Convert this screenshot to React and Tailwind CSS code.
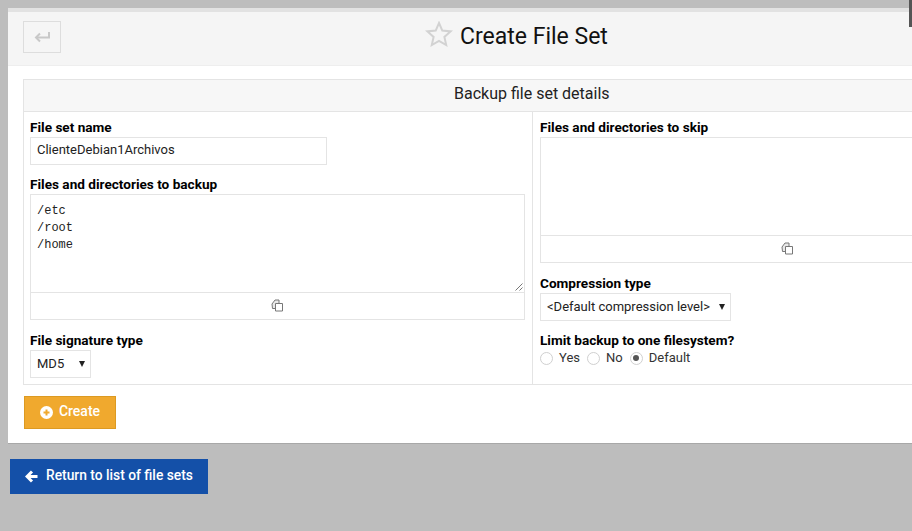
import React from "react";

const labelStyle = "block font-bold text-[13.6px] leading-[17px] text-black";
const boxStyle = "border border-[#e4e4e4] bg-white";

function CopyIcon() {
  return (
    <svg width="13" height="13" viewBox="0 0 13 13" fill="none" stroke="#777" strokeWidth="1" className="mb-[2px]">
      <path d="M4.5 9.5H1.5L1 5L4 1H8V4" fill="#e8e8e8" />
      <path d="M4.5 4.5H11.5V12H4.5Z" fill="#fff" />
    </svg>
  );
}

function Radio({ checked, label }) {
  return (
    <label className="flex items-center">
      <span className="w-[13px] h-[13px] rounded-full border border-[#d0d0d0] bg-white flex items-center justify-center">
        {checked && <span className="w-[6px] h-[6px] rounded-full bg-[#555]" />}
      </span>
      <span className="ml-[6px] text-[13px] leading-[16px] text-[#333]">{label}</span>
    </label>
  );
}

function Select({ value, width }) {
  return (
    <div className={`${boxStyle} ${width} h-[28px] flex items-center justify-between pl-[6px] pr-[5px] text-[13px] text-[#222]`}>
      <span>{value}</span>
      <span className="w-0 h-0 border-l-[3.5px] border-r-[3.5px] border-t-[6px] border-l-transparent border-r-transparent border-t-[#222]" />
    </div>
  );
}

function CodeBox({ lines, handle }) {
  return (
    <div className={`${boxStyle} border-b-0 relative h-[98px] px-[6px] pt-[8px] font-['Liberation_Mono',monospace] text-[12px] leading-[17px] text-[#222]`}>
      {lines.map((line) => (
        <div key={line}>{line}</div>
      ))}
      {handle && (
        <svg width="8" height="8" viewBox="0 0 8 8" stroke="#777" className="absolute right-[1px] bottom-[1px]">
          <path d="M0.5 7.5L7.5 0.5M4.5 7.5L7.5 4.5" />
        </svg>
      )}
    </div>
  );
}

export default function App() {
  return (
    <div className="relative w-[912px] h-[531px] overflow-hidden bg-[#bdbdbd] pt-[8px] pl-[8px] font-['Roboto',sans-serif]">
      <div className="w-[1100px] bg-white border-b border-[#a8a8a8] border-t-[4px] border-t-[#e2e2e2]">
        <div className="w-[904px] h-[54px] bg-[#f5f5f5] border-b border-[#eeeeee] flex items-start relative">
          <button className="ml-[15px] mt-[9px] w-[38px] h-[32px] border border-[#dddddd] flex items-center justify-center">
            <svg width="16" height="12" viewBox="0 0 16 12" fill="none" stroke="#c8c8c8" strokeWidth="2">
              <path d="M15 1V6.5H2" />
              <path d="M6 2.5L2 6.5L6 10.5" />
            </svg>
          </button>
          <div className="absolute left-[417px] top-[9px] flex items-start">
            <svg width="28" height="26" viewBox="0 0 28 26" fill="none" stroke="#d2d2d2" strokeWidth="2">
              <path d="M14 2L17.3 9.6L25.6 10.4L19.4 15.9L21.2 24L14 19.8L6.8 24L8.6 15.9L2.4 10.4L10.7 9.6Z" />
            </svg>
            <h1 className="ml-[7px] mt-[1px] text-[23px] leading-[30px] text-[#111]">Create File Set</h1>
          </div>
        </div>

        <div className="pl-[15px] pt-[13px]">
          <div className="w-[1020px] border border-[#e4e4e4]">
            <div className="h-[32px] bg-[#f7f7f7] border-b border-[#e4e4e4] pl-[430px] text-[16px] leading-[27px] text-[#222]">
              Backup file set details
            </div>
            <div className="flex">
              <div className="w-[509px] pl-[6px] pt-[7px] pb-[6px] border-r border-[#e4e4e4]">
                <label className={labelStyle}>File set name</label>
                <div className={`${boxStyle} w-[297px] h-[28px] mt-[1px] pl-[6px] text-[13px] leading-[24px] text-[#222]`}>
                  ClienteDebian1Archivos
                </div>
                <label className={`${labelStyle} mt-[11px]`}>Files and directories to backup</label>
                <div className="mt-[1px] w-[495px]">
                  <CodeBox lines={["/etc", "/root", "/home"]} handle />
                  <div className={`${boxStyle} h-[28px] flex items-center justify-center`}>
                    <CopyIcon />
                  </div>
                </div>
                <label className={`${labelStyle} mt-[12px]`}>File signature type</label>
                <div className="mt-[1px]">
                  <Select value="MD5" width="w-[61px]" />
                </div>
              </div>
              <div className="flex-1 pl-[7px] pt-[7px]">
                <label className={labelStyle}>Files and directories to skip</label>
                <div className="mt-[1px] w-[494px]">
                  <CodeBox lines={[]} />
                  <div className={`${boxStyle} h-[28px] flex items-center justify-center`}>
                    <CopyIcon />
                  </div>
                </div>
                <label className={`${labelStyle} mt-[12px]`}>Compression type</label>
                <div className="mt-[1px]">
                  <Select value="<Default compression level>" width="w-[191px]" />
                </div>
                <label className={`${labelStyle} mt-[11px]`}>Limit backup to one filesystem?</label>
                <div className="flex gap-[7px] mt-[1px]">
                  <Radio label="Yes" />
                  <Radio label="No" />
                  <Radio label="Default" checked />
                </div>
              </div>
            </div>
          </div>
          <button className="mt-[11px] mb-[14px] ml-[1px] w-[92px] h-[33px] bg-[#f0a92e] border border-[#dc9a22] flex items-center justify-center text-white text-[14px] font-medium">
            <svg width="13" height="13" viewBox="0 0 13 13" className="mr-[6px]">
              <circle cx="6.5" cy="6.5" r="6.5" fill="#fff" />
              <path d="M3.5 6.5H9.5M6.5 3.5V9.5" stroke="#f0a92e" strokeWidth="2" />
            </svg>
            <span className="mb-[2px]">Create</span>
          </button>
        </div>
      </div>

      <button className="mt-[15px] ml-[2px] w-[198px] h-[35px] bg-[#1450a8] flex items-center pl-[15px] text-white text-[13.8px] font-medium">
        <svg width="13" height="13" viewBox="0 0 13 13" fill="none" stroke="#fff" strokeWidth="3" className="mr-[8px]">
          <path d="M12.5 6.5H3" />
          <path d="M7 1.5L2 6.5L7 11.5" />
        </svg>
        <span className="mb-[2px]">Return to list of file sets</span>
      </button>

      <div className="absolute right-0 top-0 w-[3px] h-[27px] bg-[#555555]" />
    </div>
  );
}
